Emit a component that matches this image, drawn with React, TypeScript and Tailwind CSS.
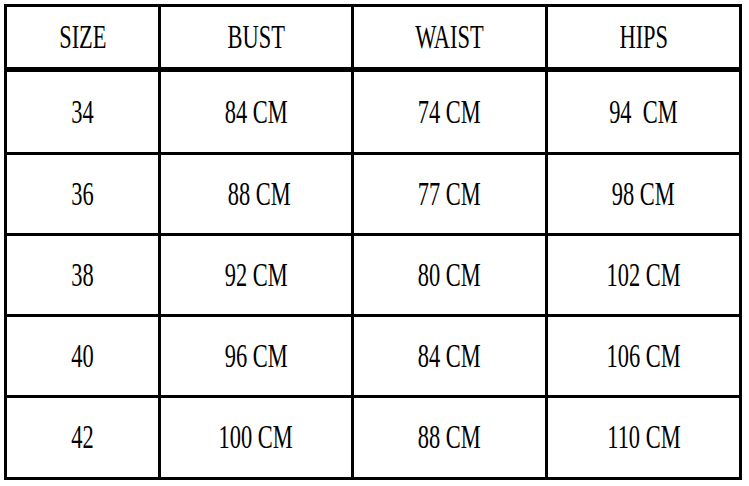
const headers = ["SIZE", "BUST", "WAIST", "HIPS"]

const rows = [
  { h: "h-[80px]", cells: ["34", "84 CM", "74 CM", "94  CM"] },
  { h: "h-[78px]", cells: ["36", " 88 CM", "77 CM", "98 CM"] },
  { h: "h-[78px]", cells: ["38", "92 CM", "80 CM", "102 CM"] },
  { h: "h-[78px]", cells: ["40", "96 CM", "84 CM", "106 CM"] },
  { h: "h-[79px]", cells: ["42", "100 CM", "88 CM", "110 CM"] },
]

const cols = "grid grid-cols-[151px_190px_191px_191px] gap-x-[3px]"

function Cell({ text, className }: { text: string; className: string }) {
  return (
    <div className={`flex items-center justify-center bg-white ${className}`}>
      <span className="inline-block whitespace-pre text-[33px] leading-none text-black font-[family-name:Liberation_Serif,Times_New_Roman,serif] scale-x-[0.68]">
        {text}
      </span>
    </div>
  )
}

export default function App() {
  return (
    <div className="min-h-[486px] w-[749px] bg-white pl-[4px] pt-[4px]">
      <div className="flex w-[738px] flex-col bg-black p-[3px]">
        <div className={cols}>
          {headers.map((t) => (
            <Cell key={t} text={t} className="h-[60px]" />
          ))}
        </div>
        <div className="flex flex-col gap-y-[3px] pt-[5px]">
          {rows.map((row) => (
            <div key={row.cells[0]} className={cols}>
              {row.cells.map((t, i) => (
                <Cell key={i} text={t} className={row.h} />
              ))}
            </div>
          ))}
        </div>
      </div>
    </div>
  )
}
